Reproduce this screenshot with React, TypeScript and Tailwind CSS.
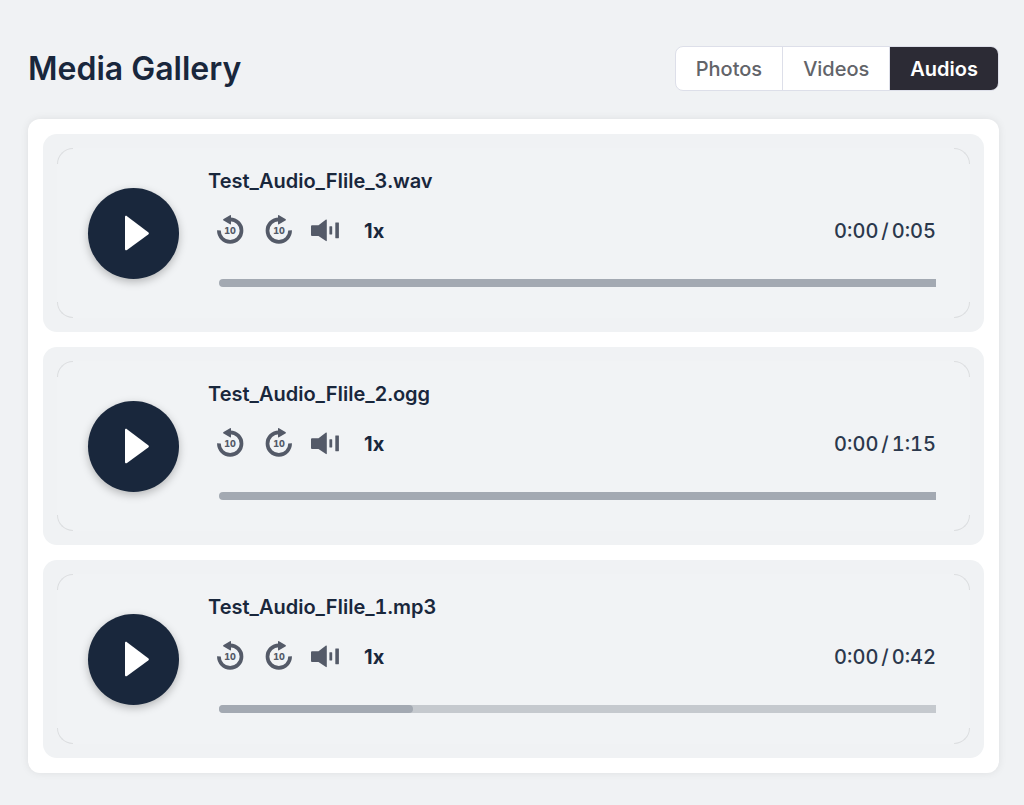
import { useState } from "react"
import clsx from "clsx"

type Track = {
  name: string
  duration: string
  seconds: number
  buffered: number
}

const TABS = ["Photos", "Videos", "Audios"]

const TRACKS: Track[] = [
  { name: "Test_Audio_FIile_3.wav", duration: "0:05", seconds: 5, buffered: 100 },
  { name: "Test_Audio_FIile_2.ogg", duration: "1:15", seconds: 75, buffered: 100 },
  { name: "Test_Audio_FIile_1.mp3", duration: "0:42", seconds: 42, buffered: 27 },
]

function SkipIcon({ forward = false }: { forward?: boolean }) {
  return (
    <svg viewBox="0 0 28 32" className="h-8 w-7" aria-hidden="true">
      <g transform={forward ? "translate(28 0) scale(-1 1)" : undefined}>
        <path d="M2.9 15.4a11.3 11.3 0 1 0 11.3-11.1" fill="none" stroke="currentColor" strokeWidth="3.7" />
        <path d="M7.600 4 14 .2c.6-.3 1 0 1 .6v8c0 .7-.5.9-1 .5L7.600 5.500a.9.9 0 0 1 0-1.500z" fill="currentColor" />
      </g>
      <text x="14" y="19" textAnchor="middle" fontSize="9" fontWeight="800" fill="currentColor">
        10
      </text>
    </svg>
  )
}

function VolumeIcon() {
  return (
    <svg viewBox="0 0 28 32" className="h-8 w-7" fill="currentColor" aria-hidden="true">
      <path d="M1 10.300h6.500L15 4.600c.4-.3.8-.1.8.4v20.600c0 .5-.4.7-.8.4l-7.500-5H1a1 1 0 0 1-1-1v-8.700a1 1 0 0 1 1-1z" />
      <rect x="18.4" y="11.3" width="2.8" height="8.2" rx=".4" />
      <rect x="24.3" y="7.4" width="3.6" height="15.8" rx=".4" />
    </svg>
  )
}

function Corners() {
  return (
    <>
      <span className="absolute top-0 left-0 size-4 rounded-tl-2xl border-t border-l border-[#dcdee0]" />
      <span className="absolute top-0 right-0 size-4 rounded-tr-2xl border-t border-r border-[#dcdee0]" />
      <span className="absolute bottom-0 left-0 size-4 rounded-bl-2xl border-b border-l border-[#dcdee0]" />
      <span className="absolute right-0 bottom-0 size-4 rounded-br-2xl border-r border-b border-[#dcdee0]" />
    </>
  )
}

function AudioCard({ track }: { track: Track }) {
  const [rate, setRate] = useState(1)

  return (
    <li className="rounded-[14px] bg-[#f0f2f4] p-[14px]">
      <div className="relative flex items-center gap-[29px] rounded-2xl bg-[#f1f3f5] pr-[34px] pl-[31px] tabular-nums">
        <Corners />
        <button
          type="button"
          aria-label={`Play ${track.name}`}
          className="size-[91px] shrink-0 rounded-full bg-[#19273c] text-white shadow-[0_3px_9px_rgba(0,0,0,0.25)]"
        >
          <svg viewBox="0 0 91 91" className="size-full" fill="currentColor" aria-hidden="true">
            <path d="M37 29.200c0-1.300 1-1.700 2-1L60.200 44.200c.9.700.9 1.500 0 2.200L39 61.900c-1 .7-2 .3-2-1z" />
          </svg>
        </button>

        <div className="min-w-0 flex-1 pt-[21px] pb-[31px]">
          <h2 className="truncate text-xl leading-6 font-semibold">{track.name}</h2>

          <div className="mt-[22px] flex h-8 items-center">
            <div className="ml-2 flex items-center text-[#545a68]">
              <button type="button" aria-label="Back 10 seconds">
                <SkipIcon />
              </button>
              <button type="button" aria-label="Forward 10 seconds" className="ml-[21px]">
                <SkipIcon forward />
              </button>
              <button type="button" aria-label="Mute" className="ml-[18px]">
                <VolumeIcon />
              </button>
            </div>
            <button
              type="button"
              aria-label="Playback speed"
              className="ml-[25px] text-xl leading-6 font-bold normal-nums"
              onClick={() => setRate(rate === 1 ? 2 : 1)}
            >
              {rate}x
            </button>
            <div className="ml-auto flex gap-[3px] text-xl leading-6 font-medium text-[#2b384c]">
              <span>0:00</span>
              <span>/</span>
              <span>{track.duration}</span>
            </div>
          </div>

          <div className="relative mt-8 ml-[11px] h-2 overflow-hidden rounded-l-full bg-[#c5c9ce]">
            <div
              className={clsx("h-full bg-[#a3a9b2]", track.buffered < 100 && "rounded-r-full")}
              style={{ width: `${track.buffered}%` }}
            />
            <input
              type="range"
              min={0}
              max={track.seconds}
              defaultValue={0}
              aria-label={`Seek ${track.name}`}
              className="absolute inset-0 w-full cursor-pointer opacity-0"
            />
          </div>
        </div>
      </div>
    </li>
  )
}

export default function App() {
  const [active, setActive] = useState("Audios")

  return (
    <main className="min-h-screen bg-[#f0f2f4] pt-[46px] pr-[25px] pb-8 pl-7 font-['Inter','Liberation_Sans',sans-serif] text-[#19273c]">
      <header className="flex items-center justify-between">
        <h1 className="text-[32px] leading-10 font-semibold">Media Gallery</h1>
        <div
          role="tablist"
          className="flex divide-x divide-[#dddfe9] overflow-hidden rounded-lg border border-[#dddfe9] bg-white"
        >
          {TABS.map((tab) => (
            <button
              key={tab}
              type="button"
              role="tab"
              aria-selected={tab === active}
              onClick={() => setActive(tab)}
              className={clsx(
                "px-5 pt-2 pb-[7px] text-xl leading-7",
                tab === active ? "bg-[#2c2b35] font-semibold text-white" : "font-medium text-[#626469]"
              )}
            >
              {tab}
            </button>
          ))}
        </div>
      </header>

      <ul className="mt-7 flex flex-col gap-[15px] rounded-xl bg-white p-[15px] shadow-[0_0_8px_rgba(0,0,0,0.08)]">
        {TRACKS.map((track) => (
          <AudioCard key={track.name} track={track} />
        ))}
      </ul>
    </main>
  )
}
